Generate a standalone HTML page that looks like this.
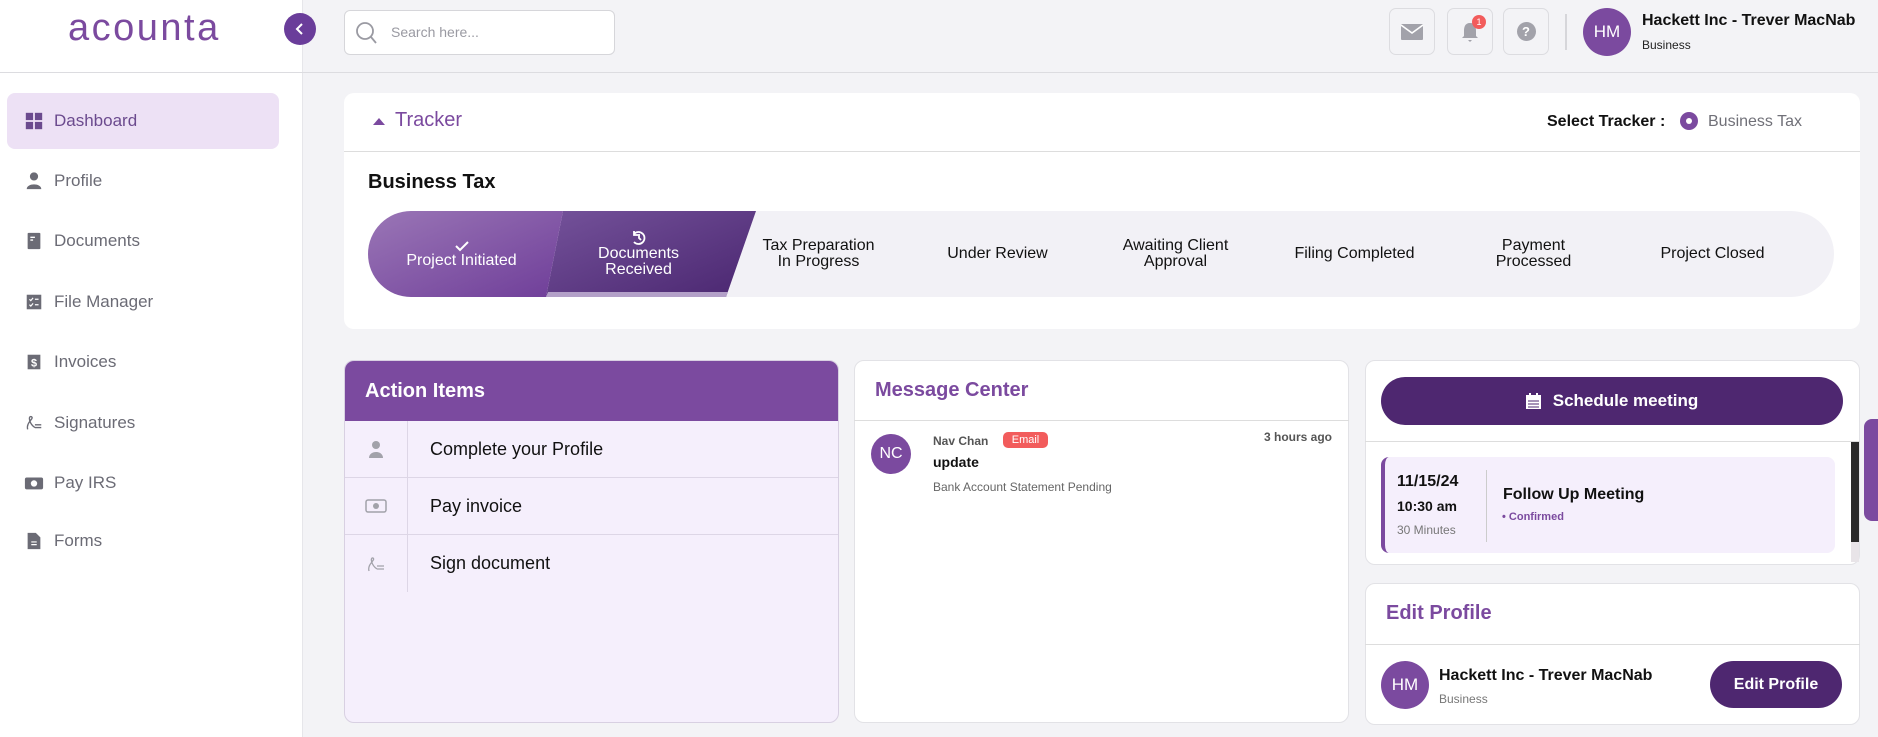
<!DOCTYPE html>
<html><head><meta charset="utf-8"><style>
*{box-sizing:border-box;margin:0;padding:0}
body{width:1878px;height:737px;overflow:hidden;background:#f3f3f6;font-family:"Liberation Sans",sans-serif;position:relative;color:#111}
.abs{position:absolute}
.side{left:0;top:0;width:303px;height:737px;background:#fff;border-right:1px solid #e6e6ea}
.logo{left:68px;top:7px;font-size:38px;color:#7b4a9f;letter-spacing:2.5px}
.hline{left:0;top:72px;width:1878px;height:1px;background:#dcdce0}
.nav{left:7px;width:272px;height:56px;display:flex;align-items:center;padding-left:17px;font-size:17px;color:#6b6b75}
.nav svg{width:20px;height:20px;margin-right:10px}
.nav.act{background:#ede1f5;border-radius:8px;color:#6b4a8e}
.card{background:#fff;border:1px solid #e2e2e6;border-radius:10px}
.ib{width:46px;height:47px;border:1px solid #dcdce0;border-radius:7px;display:flex;align-items:center;justify-content:center}
.step{width:179px;text-align:center;font-size:16px;line-height:16px;color:#111;top:211px;height:86px;display:flex;flex-direction:column;align-items:center;justify-content:center}
.row{left:0;width:494px;height:57px;border-bottom:1px solid #ddd6e6;display:flex;align-items:center;font-size:18px}
.row .ic{width:63px;height:100%;border-right:1px solid #ddd6e6;display:flex;align-items:center;justify-content:center}
.row span{padding-left:22px}
</style></head><body>
<div class="abs side"></div>
<div class="abs logo">acounta</div>
<div class="abs" style="left:284px;top:13px;width:32px;height:32px;border-radius:50%;background:#6a3d9a;color:#fff;display:flex;align-items:center;justify-content:center"><svg width="12" height="14" viewBox="0 0 12 14"><path d="M8 2 L3 7 L8 12" stroke="#fff" stroke-width="2" fill="none"/></svg></div>
<div class="abs hline"></div>
<div class="abs" style="left:344px;top:10px;width:271px;height:45px;background:#fff;border:1px solid #d6d6da;border-radius:6px"></div>
<svg class="abs" style="left:355px;top:21px" width="22" height="24" viewBox="0 0 22 24"><circle cx="10" cy="10" r="8" stroke="#9a9aa2" stroke-width="1.8" fill="none"/><path d="M16 16 L21 22" stroke="#9a9aa2" stroke-width="1.8"/></svg>
<div class="abs" style="left:391px;top:24px;font-size:14px;color:#9a9aa2">Search here...</div>

<div class="abs ib" style="left:1389px;top:8px"><svg width="22" height="16" viewBox="0 0 22 16"><rect width="22" height="16" rx="1" fill="#a2a2aa"/><path d="M0 1 L11 9 L22 1" stroke="#fff" stroke-width="1.6" fill="none"/></svg></div>
<div class="abs ib" style="left:1447px;top:8px"><svg width="20" height="22" viewBox="0 0 20 22"><path d="M10 2 C5 2 4 6 4 10 L4 15 L2 17 L18 17 L16 15 L16 10 C16 6 15 2 10 2Z M8 19 L12 19 L10 21Z" fill="#a2a2aa"/></svg></div>
<div class="abs" style="left:1472px;top:15px;width:14px;height:14px;border-radius:50%;background:#f25c5c;color:#fff;font-size:9px;text-align:center;line-height:14px">1</div>
<div class="abs ib" style="left:1503px;top:8px"><div style="width:19px;height:19px;border-radius:50%;background:#a2a2aa;color:#fff;font-size:13px;font-weight:bold;text-align:center;line-height:19px">?</div></div>
<div class="abs" style="left:1565px;top:14px;width:2px;height:36px;background:#d6d6da"></div>
<div class="abs" style="left:1583px;top:8px;width:48px;height:48px;border-radius:50%;background:#7b4a9f;color:#fff;font-size:17px;text-align:center;line-height:48px">HM</div>
<div class="abs" style="left:1642px;top:12px;font-size:16px;font-weight:bold">Hackett Inc - Trever MacNab</div>
<div class="abs" style="left:1642px;top:38px;font-size:12px;color:#222">Business</div>

<div class="abs nav act" style="top:93px"><svg viewBox="0 0 22 22"><rect x="2" y="2" width="8" height="8" fill="#6b4a8e"/><rect x="12" y="2" width="8" height="8" fill="#6b4a8e"/><rect x="2" y="12" width="8" height="8" fill="#6b4a8e"/><rect x="12" y="12" width="8" height="8" fill="#6b4a8e"/></svg>Dashboard</div>
<div class="abs nav" style="top:153px"><svg viewBox="0 0 22 22"><circle cx="11" cy="6" r="4.5" fill="#6b6b75"/><path d="M3 20 C3 13 19 13 19 20Z" fill="#6b6b75"/></svg>Profile</div>
<div class="abs nav" style="top:213px"><svg viewBox="0 0 22 22"><rect x="4" y="2" width="14" height="18" rx="1" fill="#6b6b75"/><path d="M7 7 H12 M7 10 H10" stroke="#fff" stroke-width="1.5"/></svg>Documents</div>
<div class="abs nav" style="top:274px"><svg viewBox="0 0 22 22"><rect x="3" y="3" width="16" height="16" fill="#6b6b75"/><path d="M6 8 L7.5 9.5 L10 6.5 M6 14 L7.5 15.5 L10 12.5 M12 8 H16 M12 14 H16" stroke="#fff" stroke-width="1.3" fill="none"/></svg>File Manager</div>
<div class="abs nav" style="top:334px"><svg viewBox="0 0 22 22"><rect x="4" y="3" width="14" height="16" fill="#6b6b75"/><text x="11" y="16" font-size="12" font-weight="bold" fill="#fff" text-anchor="middle" font-family="Liberation Sans">$</text></svg>Invoices</div>
<div class="abs nav" style="top:395px"><svg viewBox="0 0 22 22"><path d="M4 18 C2 10 12 6 8 4 C4 3 6 12 12 16 M12 13 H19 M12 16 H19" stroke="#6b6b75" stroke-width="1.5" fill="none"/></svg>Signatures</div>
<div class="abs nav" style="top:455px"><svg viewBox="0 0 22 22"><rect x="1" y="5" width="20" height="13" rx="2" fill="#6b6b75"/><circle cx="11" cy="11.5" r="3.5" fill="#fff"/></svg>Pay IRS</div>
<div class="abs nav" style="top:513px"><svg viewBox="0 0 22 22"><path d="M4 2 H13 L18 7 V20 H4Z" fill="#6b6b75"/><path d="M8 12 H14 M8 15 H14" stroke="#fff" stroke-width="1.3"/></svg>Forms</div>

<div class="abs card" style="left:344px;top:93px;width:1516px;height:236px;border:none"></div>
<div class="abs" style="left:344px;top:151px;width:1516px;height:1px;background:#ddd"></div>
<svg class="abs" style="left:373px;top:116px" width="12" height="10"><path d="M0 9 L6 2 L12 9Z" fill="#7b4a9f"/></svg>
<div class="abs" style="left:395px;top:109px;font-size:20px;color:#7b4a9f">Tracker</div>
<div class="abs" style="left:1547px;top:113px;font-size:16px;font-weight:bold">Select Tracker :</div>
<div class="abs" style="left:1680px;top:112px;width:18px;height:18px;border-radius:50%;background:#7b4a9f"><div style="margin:6px;width:6px;height:6px;border-radius:50%;background:#fff"></div></div>
<div class="abs" style="left:1708px;top:113px;font-size:16px;color:#707078">Business Tax</div>
<div class="abs" style="left:368px;top:171px;font-size:20px;font-weight:bold">Business Tax</div>
<div class="abs" style="left:368px;top:211px;width:1466px;height:86px;border-radius:43px;background:#f2f1f6;overflow:hidden">
<svg width="420" height="86" style="position:absolute;left:0;top:0"><defs><linearGradient id="g1" x1="0" y1="0" x2="1" y2="1"><stop offset="0" stop-color="#9a76b6"/><stop offset="1" stop-color="#6f3e99"/></linearGradient><linearGradient id="g2" x1="0" y1="0" x2="1" y2="1"><stop offset="0" stop-color="#74529a"/><stop offset="1" stop-color="#4a2670"/></linearGradient></defs>
<path d="M195 0 L388 0 L358 86 L178 86Z" fill="url(#g2)"/><path d="M0 0 L195 0 L178 86 L0 86Z" fill="url(#g1)"/><path d="M180 81 L360 81 L358 86 L178 86Z" fill="#b3a0c8"/></svg>
</div>
<div class="abs step" style="left:372px;color:#fff"><svg width="16" height="14"><path d="M2 7 L6 11 L14 3" stroke="#fff" stroke-width="2" fill="none"/></svg>Project Initiated</div>
<div class="abs step" style="left:549px;color:#fff"><svg width="18" height="16" viewBox="0 0 18 16"><path d="M4 4 A6 6 0 1 1 4 12 M4 1 V5 H8 M9 4 V8 L11 10" stroke="#fff" stroke-width="1.8" fill="none"/></svg>Documents<br>Received</div>
<div class="abs step" style="left:729px">Tax Preparation<br>In Progress</div>
<div class="abs step" style="left:908px">Under Review</div>
<div class="abs step" style="left:1086px">Awaiting Client<br>Approval</div>
<div class="abs step" style="left:1265px">Filing Completed</div>
<div class="abs step" style="left:1444px">Payment<br>Processed</div>
<div class="abs step" style="left:1623px">Project Closed</div>

<div class="abs" style="left:344px;top:360px;width:495px;height:363px;border-radius:10px;background:#f5effc;border:1px solid #d8d0e2;overflow:hidden">
<div style="height:60px;background:#7b4a9f;color:#fff;font-size:20px;font-weight:bold;padding:19px 0 0 20px">Action Items</div>
<div class="abs row" style="top:60px"><div class="ic"><svg width="16" height="18"><circle cx="8" cy="5" r="4" fill="#a2a2aa"/><path d="M1 18 C1 10 15 10 15 18Z" fill="#a2a2aa"/></svg></div><span>Complete your Profile</span></div>
<div class="abs row" style="top:117px"><div class="ic"><svg width="22" height="14"><rect x="1" y="1" width="20" height="12" rx="2" fill="none" stroke="#a2a2aa" stroke-width="1.5"/><circle cx="11" cy="7" r="3" fill="#a2a2aa"/></svg></div><span>Pay invoice</span></div>
<div class="abs row" style="top:174px;border-bottom:none"><div class="ic"><svg width="20" height="18"><path d="M3 16 C1 9 10 5 7 3 C4 2 5 10 11 14 M11 11 H18 M11 14 H18" stroke="#a2a2aa" stroke-width="1.3" fill="none"/></svg></div><span>Sign document</span></div>
</div>

<div class="abs card" style="left:854px;top:360px;width:495px;height:363px"></div>
<div class="abs" style="left:854px;top:420px;width:495px;height:1px;background:#ddd"></div>
<div class="abs" style="left:875px;top:379px;font-size:20px;font-weight:bold;color:#7b4a9f">Message Center</div>
<div class="abs" style="left:871px;top:434px;width:40px;height:40px;border-radius:50%;background:#7b4a9f;color:#fff;font-size:16px;text-align:center;line-height:40px">NC</div>
<div class="abs" style="left:933px;top:434px;font-size:12px;color:#555;font-weight:bold">Nav Chan</div>
<div class="abs" style="left:1003px;top:432px;width:45px;height:16px;border-radius:5px;background:#f25c5c;color:#fff;font-size:11px;text-align:center;line-height:16px">Email</div>
<div class="abs" style="left:1264px;top:430px;font-size:12px;color:#555;font-weight:bold">3 hours ago</div>
<div class="abs" style="left:933px;top:454px;font-size:14px;font-weight:bold">update</div>
<div class="abs" style="left:933px;top:480px;font-size:12px;color:#666">Bank Account Statement Pending</div>

<div class="abs card" style="left:1365px;top:360px;width:495px;height:205px"></div>
<div class="abs" style="left:1381px;top:377px;width:462px;height:48px;border-radius:24px;background:#4e2770;color:#fff;font-size:17px;font-weight:bold;display:flex;align-items:center;justify-content:center"><svg width="15" height="16" style="margin-right:12px"><rect x="0" y="2" width="15" height="14" fill="#fff"/><rect x="3" y="0" width="2" height="4" fill="#fff"/><rect x="10" y="0" width="2" height="4" fill="#fff"/><path d="M2 8 H13 M2 11 H13 M2 14 H13" stroke="#4e2770" stroke-width="1"/></svg>Schedule meeting</div>
<div class="abs" style="left:1365px;top:441px;width:495px;height:1px;background:#ddd"></div>
<div class="abs" style="left:1381px;top:457px;width:454px;height:96px;border-radius:8px;background:#f5effc;border-left:4px solid #7b4a9f"></div>
<div class="abs" style="left:1397px;top:473px;font-size:16px;font-weight:bold">11/15/24</div>
<div class="abs" style="left:1397px;top:498px;font-size:14px;font-weight:bold">10:30 am</div>
<div class="abs" style="left:1397px;top:523px;font-size:12px;color:#777">30 Minutes</div>
<div class="abs" style="left:1486px;top:470px;width:1px;height:72px;background:#ccc"></div>
<div class="abs" style="left:1503px;top:486px;font-size:16px;font-weight:bold">Follow Up Meeting</div>
<div class="abs" style="left:1502px;top:511px;font-size:11px;font-weight:bold;color:#7b4a9f">• Confirmed</div>
<div class="abs" style="left:1851px;top:442px;width:8px;height:100px;background:#2a2a2a"></div>
<div class="abs" style="left:1851px;top:542px;width:8px;height:20px;background:#e8e4e8"></div>
<div class="abs" style="left:1864px;top:419px;width:20px;height:102px;border-radius:8px 0 0 8px;background:#7b4a9f"></div>

<div class="abs card" style="left:1365px;top:583px;width:495px;height:142px"></div>
<div class="abs" style="left:1365px;top:644px;width:495px;height:1px;background:#ddd"></div>
<div class="abs" style="left:1386px;top:602px;font-size:20px;font-weight:bold;color:#7b4a9f">Edit Profile</div>
<div class="abs" style="left:1381px;top:661px;width:48px;height:48px;border-radius:50%;background:#7b4a9f;color:#fff;font-size:17px;text-align:center;line-height:48px">HM</div>
<div class="abs" style="left:1439px;top:667px;font-size:16px;font-weight:bold">Hackett Inc - Trever MacNab</div>
<div class="abs" style="left:1439px;top:692px;font-size:12px;color:#777">Business</div>
<div class="abs" style="left:1710px;top:661px;width:132px;height:47px;border-radius:24px;background:#4e2770;color:#fff;font-size:16px;font-weight:bold;text-align:center;line-height:47px">Edit Profile</div>
</body></html>
